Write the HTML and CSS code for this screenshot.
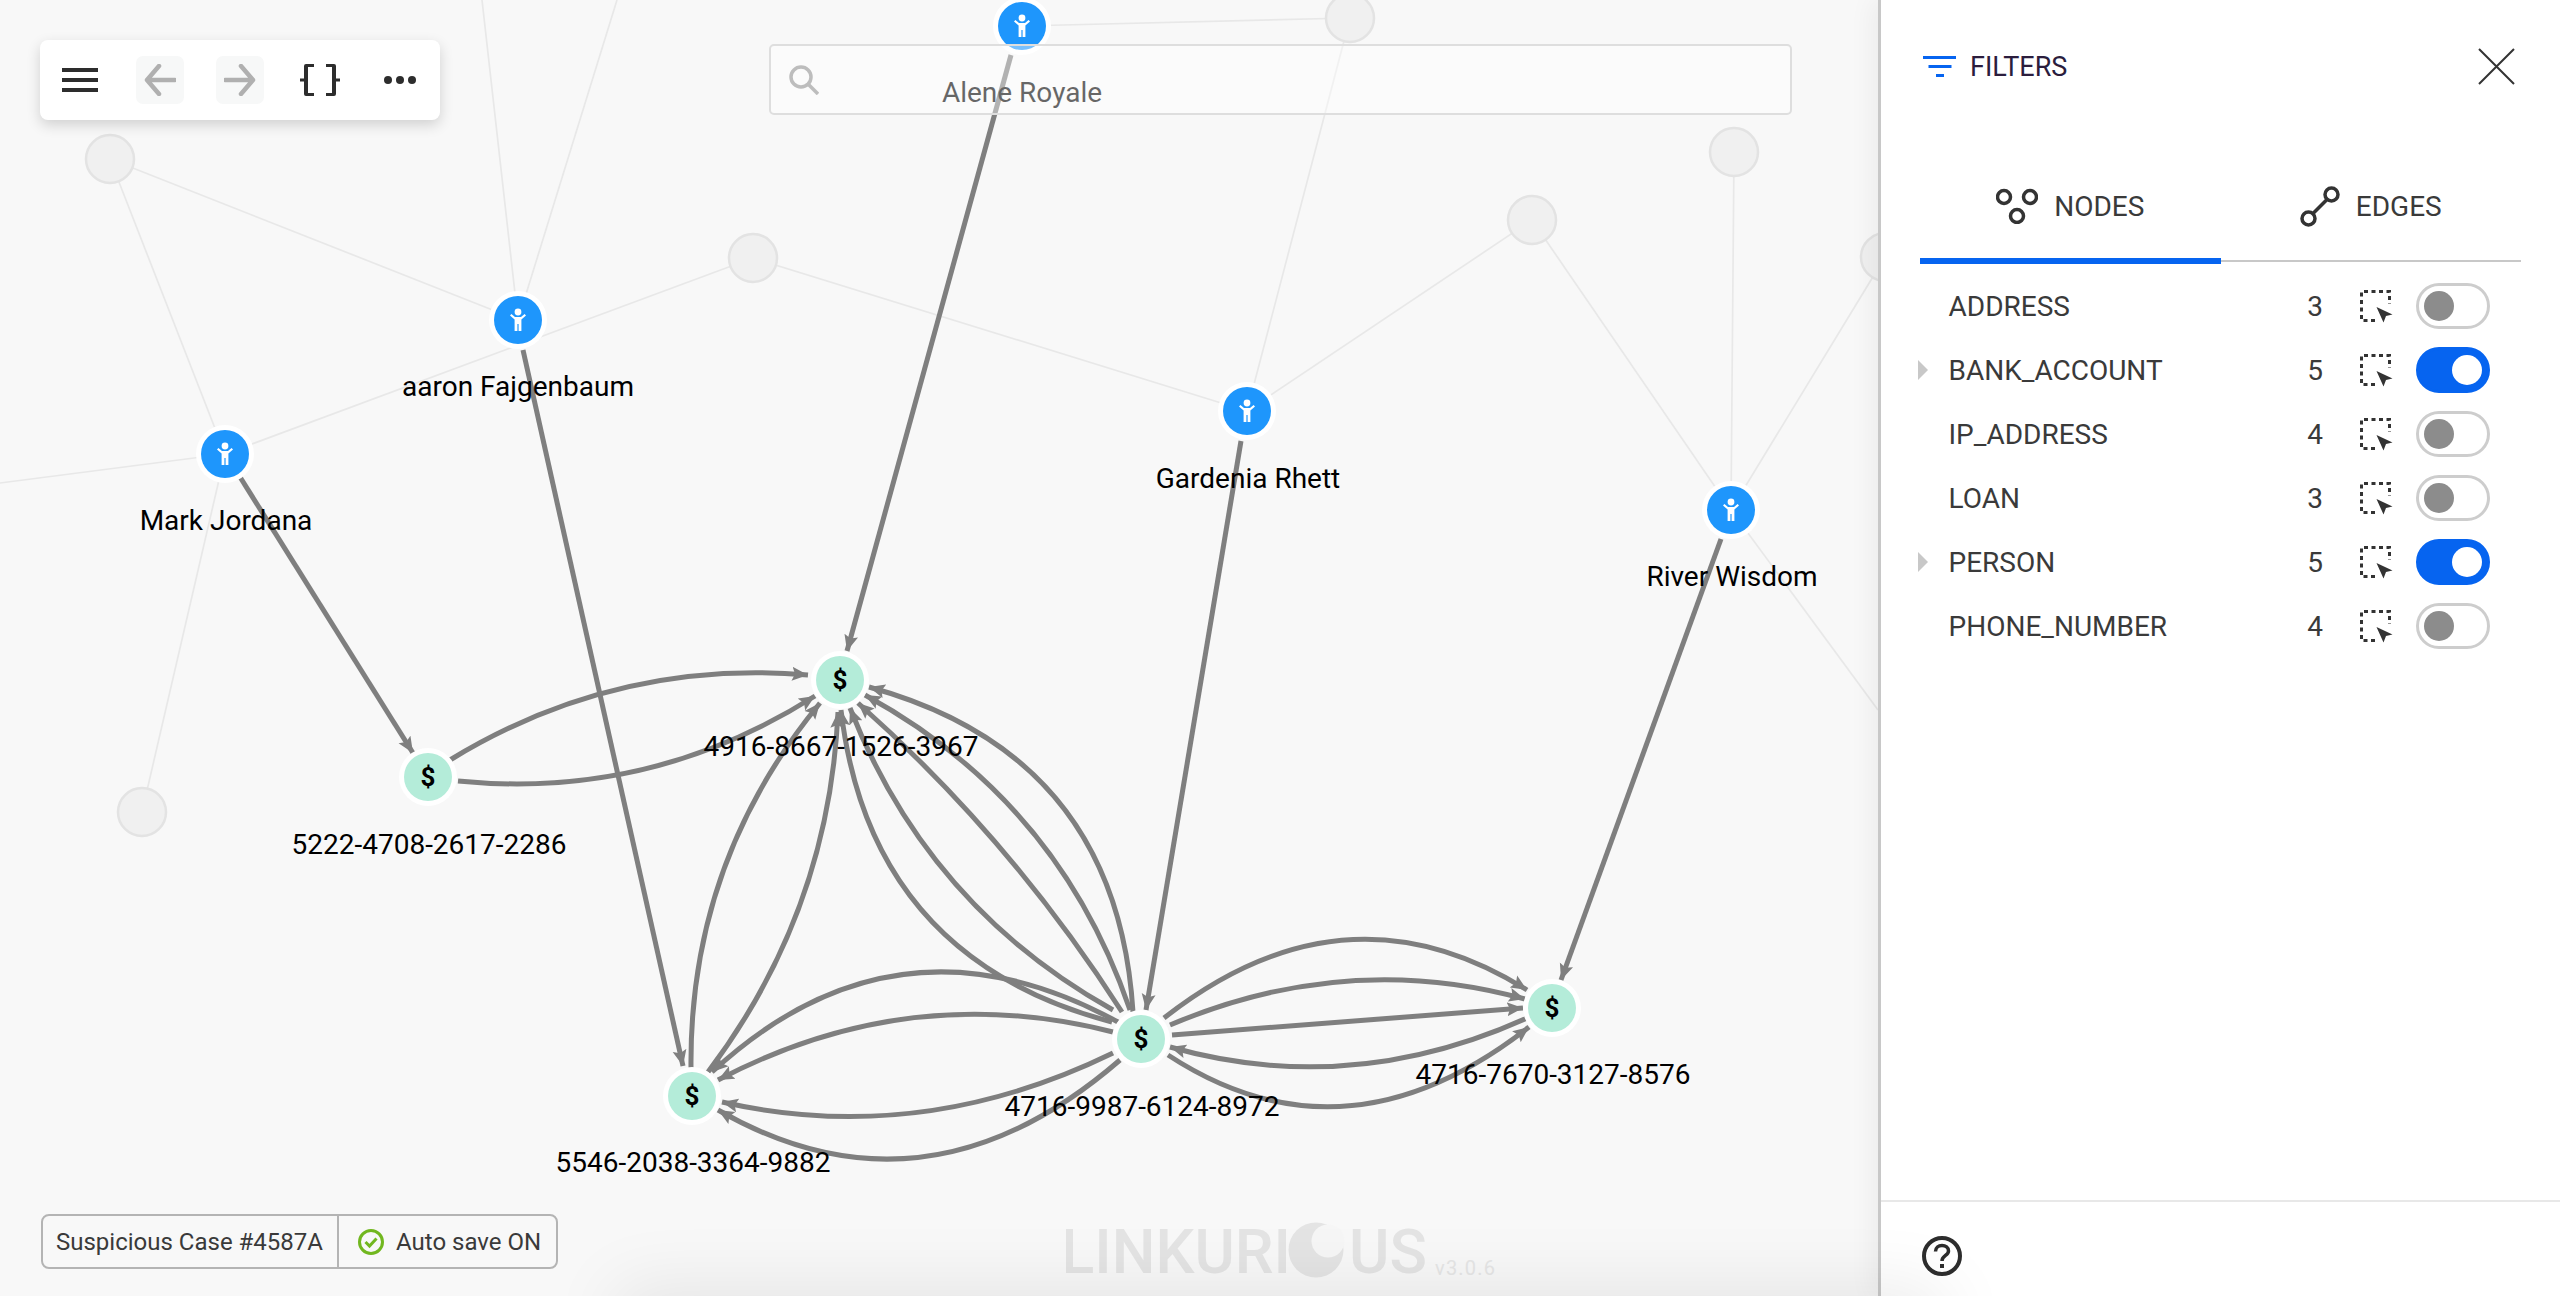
FILE: index.html
```html
<!DOCTYPE html>
<html lang="en">
<head>
<meta charset="utf-8">
<title>Linkurious - Filters</title>
<link rel="stylesheet" href="styles.css">
</head>
<body>
<svg class="defs" width="0" height="0" aria-hidden="true">
  <defs>
    <marker id="arrow" markerUnits="userSpaceOnUse" markerWidth="17" markerHeight="16" refX="16" refY="8" orient="auto">
      <path class="arrowhead" d="M0 1 L16 8 L0 15 L3 8 Z"/>
    </marker>
    <symbol id="person" viewBox="-12 -12 24 24">
      <circle cx="0" cy="-8" r="3.4"/>
      <path d="M-8-4.6-6.6-6-3-3H3L6.6-6 8-4.6 3.4-.4V11H.6V4H-.6V11H-3.4V-.4Z"/>
    </symbol>
    <symbol id="select" viewBox="0 0 33 33">
      <path class="sel-dash" d="M15 30.5H1.5V1.5H29.5V14"/>
      <path class="sel-cursor" d="M16.5 17 32.5 24.5 26 26 23.5 32.5Z"/>
    </symbol>
  </defs>
</svg>

<main class="canvas">
  <svg class="graph" width="1878" height="1296" viewBox="0 0 1878 1296">
    <g class="faint">
      <path d="M110 159 518 320"/><path d="M110 159 225 454"/><path d="M482 0 518 320"/><path d="M617 0 518 320"/>
      <path d="M225 454 753 258"/><path d="M753 258 1247 411"/><path d="M225 454 0 483"/><path d="M225 454 142 812"/>
      <path d="M1022 26 1350 18"/><path d="M1350 18 1247 411"/><path d="M1532 220 1247 411"/><path d="M1532 220 1731 510"/>
      <path d="M1734 152 1731 510"/><path d="M1885 257 1731 510"/><path d="M1731 510 1878 710"/>
    </g>
    <g class="ghost">
      <circle cx="110" cy="159" r="24"/><circle cx="753" cy="258" r="24"/><circle cx="142" cy="812" r="24"/>
      <circle cx="1350" cy="18" r="24"/><circle cx="1532" cy="220" r="24"/><circle cx="1734" cy="152" r="24"/><circle cx="1885" cy="257" r="24"/>
    </g>
    <g class="edge">
      <path d="M240 477 413 753"/>
      <path d="M523 350 683 1066"/>
      <path d="M1011 55 847 651"/>
      <path d="M1241 441 1146 1010"/>
      <path d="M1721 539 1561 980"/>
      <path d="M450 760Q615 659 808 675"/>
      <path d="M458 781Q651 800 815 696"/>
      <path d="M708 1072Q829 912 838 712"/>
      <path d="M691 1068Q689 862 820 703"/>
      <path d="M1133 1012Q1117 755 869 687"/>
      <path d="M1130 1010Q1059 801 865 695"/>
      <path d="M1122 1012Q1011 839 858 703"/>
      <path d="M1113 1010Q927 906 850 708"/>
      <path d="M1112 1022Q870 958 841 710"/>
      <path d="M1118 1022Q897 901 712 1072"/>
      <path d="M1113 1032Q908 980 718 1080"/>
      <path d="M1113 1053Q920 1147 722 1102"/>
      <path d="M1120 1060Q925 1229 718 1110"/>
      <path d="M1164 1018Q1345 876 1527 990"/>
      <path d="M1170 1025Q1347 950 1525 999"/>
      <path d="M1172 1035 1523 1008"/>
      <path d="M1527 1018Q1350 1098 1170 1047"/>
      <path d="M1168 1055Q1345 1171 1529 1027"/>
    </g>
    <g class="ring">
      <circle cx="1022" cy="26" r="29"/><circle cx="518" cy="320" r="29"/><circle cx="225" cy="454" r="29"/><circle cx="1247" cy="411" r="29"/><circle cx="1731" cy="510" r="29"/>
      <circle cx="428" cy="777" r="29"/><circle cx="840" cy="680" r="29"/><circle cx="692" cy="1096" r="29"/><circle cx="1141" cy="1039" r="29"/><circle cx="1552" cy="1008" r="29"/>
    </g>
    <g class="person-fill">
      <circle cx="1022" cy="26" r="24"/><circle cx="518" cy="320" r="24"/><circle cx="225" cy="454" r="24"/><circle cx="1247" cy="411" r="24"/><circle cx="1731" cy="510" r="24"/>
    </g>
    <g class="person-icon">
      <use href="#person" x="1010" y="14" width="24" height="24"/>
      <use href="#person" x="506" y="308" width="24" height="24"/>
      <use href="#person" x="213" y="442" width="24" height="24"/>
      <use href="#person" x="1235" y="399" width="24" height="24"/>
      <use href="#person" x="1719" y="498" width="24" height="24"/>
    </g>
    <g class="account-fill">
      <circle cx="428" cy="777" r="24"/><circle cx="840" cy="680" r="24"/><circle cx="692" cy="1096" r="24"/><circle cx="1141" cy="1039" r="24"/><circle cx="1552" cy="1008" r="24"/>
    </g>
    <g class="dollar">
      <text x="428" y="786">$</text><text x="840" y="689">$</text><text x="692" y="1105">$</text><text x="1141" y="1048">$</text><text x="1552" y="1017">$</text>
    </g>
    <g class="label">
      <text x="1022" y="102">Alene Royale</text>
      <text x="518" y="396">aaron Fajgenbaum</text>
      <text x="226" y="530">Mark Jordana</text>
      <text x="1248" y="488">Gardenia Rhett</text>
      <text x="1732" y="586">River Wisdom</text>
      <text x="429" y="854">5222-4708-2617-2286</text>
      <text x="841" y="756">4916-8667-1526-3967</text>
      <text x="693" y="1172">5546-2038-3364-9882</text>
      <text x="1142" y="1116">4716-9987-6124-8972</text>
      <text x="1553" y="1084">4716-7670-3127-8576</text>
    </g>
  </svg>

  <nav class="toolbar">
    <span class="tool">
      <svg width="36" height="24" viewBox="0 0 36 24"><path class="ico-fill" d="M0 0H36V4H0ZM0 10H36V14H0ZM0 20H36V24H0Z"/></svg>
    </span>
    <span class="tool"><span class="tool-off">
      <svg width="32" height="32" viewBox="0 0 32 32"><path class="ico-off" d="M31 16H3M15 2 3 16 15 30"/></svg>
    </span></span>
    <span class="tool"><span class="tool-off">
      <svg width="32" height="32" viewBox="0 0 32 32"><path class="ico-off" d="M1 16H29M17 2 29 16 17 30"/></svg>
    </span></span>
    <span class="tool">
      <svg width="40" height="32" viewBox="0 0 40 32"><path class="ico-fill" d="M4 2Q4 0 6 0H14V3H8V29H14V32H6Q4 32 4 30V17.500H0V14.500H4ZM36 2Q36 0 34 0H26V3H32V29H26V32H34Q36 32 36 30V17.500H40V14.500H36Z"/></svg>
    </span>
    <span class="tool">
      <svg width="32" height="8" viewBox="0 0 32 8"><circle class="ico-fill" cx="4" cy="4" r="4"/><circle class="ico-fill" cx="16" cy="4" r="4"/><circle class="ico-fill" cx="28" cy="4" r="4"/></svg>
    </span>
  </nav>

  <div class="search">
    <svg width="30" height="30" viewBox="0 0 30 30"><circle class="search-ico" cx="12" cy="12" r="10"/><path class="search-ico" d="M19 19 29 29"/></svg>
  </div>

  <div class="status">
    <span class="status-cell status-name">Suspicious Case #4587A</span>
    <span class="status-cell status-save">
      <svg width="26" height="26" viewBox="0 0 26 26"><circle class="check" cx="13" cy="13" r="11.500"/><path class="check" d="M7.500 13 11.500 17 18.500 9.500"/></svg>
      Auto save ON
    </span>
  </div>

  <div class="logo">
    <svg width="440" height="60" viewBox="0 0 440 60">
      <text class="logo-text" x="-5" y="51" textLength="230" lengthAdjust="spacingAndGlyphs">LINKURI</text>
      <circle class="logo-o" cx="250" cy="28" r="27.500"/>
      <circle class="logo-cut" cx="262" cy="19" r="16.500"/>
      <text class="logo-text" x="283" y="51" textLength="78" lengthAdjust="spacingAndGlyphs">US</text>
      <text class="logo-version" x="369" y="53">v3.0.6</text>
    </svg>
  </div>
</main>

<aside class="panel">
  <header class="panel-head">
    <svg class="filter-ico" width="33" height="21" viewBox="0 0 33 21"><path d="M0 0H33V3H0ZM5.500 9H28.500V12H5.500ZM13 18H21V21H13Z"/></svg>
    <span class="panel-title">FILTERS</span>
    <svg class="close-ico" width="37" height="37" viewBox="0 0 37 37"><path d="M1 1 36 36M36 1 1 36"/></svg>
  </header>

  <div class="tabs">
    <div class="tab tab-active">
      <svg width="42" height="36" viewBox="0 0 42 36"><g class="tab-ico"><circle cx="8" cy="9" r="6.500"/><circle cx="34" cy="9" r="6.500"/><circle cx="21" cy="28" r="6.500"/></g></svg>
      <span>NODES</span>
    </div>
    <div class="tab">
      <svg width="40" height="41" viewBox="0 0 40 41"><g class="tab-ico"><circle cx="8.500" cy="32.500" r="6.500"/><circle cx="31.500" cy="8.500" r="6.500"/><path d="M13 27.500 27 13.500"/></g></svg>
      <span>EDGES</span>
    </div>
  </div>

  <ul class="rows">
    <li class="row"><span class="caret caret-none"></span><span class="row-name">ADDRESS</span><span class="row-count">3</span><svg class="row-sel" width="33" height="33"><use href="#select"/></svg><span class="toggle"><span class="knob"></span></span></li>
    <li class="row"><span class="caret"></span><span class="row-name">BANK_ACCOUNT</span><span class="row-count">5</span><svg class="row-sel" width="33" height="33"><use href="#select"/></svg><span class="toggle toggle-on"><span class="knob"></span></span></li>
    <li class="row"><span class="caret caret-none"></span><span class="row-name">IP_ADDRESS</span><span class="row-count">4</span><svg class="row-sel" width="33" height="33"><use href="#select"/></svg><span class="toggle"><span class="knob"></span></span></li>
    <li class="row"><span class="caret caret-none"></span><span class="row-name">LOAN</span><span class="row-count">3</span><svg class="row-sel" width="33" height="33"><use href="#select"/></svg><span class="toggle"><span class="knob"></span></span></li>
    <li class="row"><span class="caret"></span><span class="row-name">PERSON</span><span class="row-count">5</span><svg class="row-sel" width="33" height="33"><use href="#select"/></svg><span class="toggle toggle-on"><span class="knob"></span></span></li>
    <li class="row"><span class="caret caret-none"></span><span class="row-name">PHONE_NUMBER</span><span class="row-count">4</span><svg class="row-sel" width="33" height="33"><use href="#select"/></svg><span class="toggle"><span class="knob"></span></span></li>
  </ul>

  <footer class="panel-foot">
    <svg width="40" height="40" viewBox="0 0 40 40"><circle class="help-ring" cx="20" cy="20" r="18"/><path class="help-mark" d="M13.500 15.500C13.500 11.500 16.500 9.500 20 9.500 23.500 9.500 26.500 11.500 26.500 15 26.500 19.500 20 19.500 20 25"/><path class="help-dot" d="M18 28H22V32H18Z"/></svg>
  </footer>
</aside>

<div class="bottom-fade"></div>
</body>
</html>
```

FILE: styles.css
```css
* { box-sizing: border-box; }

html, body { margin: 0; height: 100%; }

body {
  position: relative;
  display: flex;
  height: 1296px;
  overflow: hidden;
  font-family: Roboto, "Liberation Sans", sans-serif;
  background: #f8f8f8;
  color: #3a3a3a;
}

.defs { position: absolute; }

.canvas {
  position: relative;
  flex: 1;
  min-width: 0;
  background: #f8f8f8;
}

.graph { position: absolute; left: 0; top: 0; display: block; }

.arrowhead { fill: #7f7f7f; }

.faint path { fill: none; stroke: #e8e8e8; stroke-width: 1.7; }
.ghost circle { fill: #f0f0f0; stroke: #e3e3e3; stroke-width: 2.5; }

.edge path {
  fill: none;
  stroke: #7f7f7f;
  stroke-width: 5;
  marker-end: url(#arrow);
}

.ring circle { fill: #fff; }
.person-fill circle { fill: #1e96fc; }
.person-icon { fill: #fff; }
.account-fill circle { fill: #b4ecd9; }

.dollar text {
  font: 700 26px Roboto, sans-serif;
  text-anchor: middle;
  fill: #000;
}

.label text {
  font: 400 28px Roboto, sans-serif;
  text-anchor: middle;
  fill: #000;
}

.toolbar {
  position: absolute;
  left: 40px;
  top: 40px;
  display: flex;
  width: 400px;
  height: 80px;
  background: #fff;
  border-radius: 8px;
  box-shadow: 0 5px 14px rgba(0, 0, 0, .16);
}

.tool {
  flex: 0 0 80px;
  display: flex;
  align-items: center;
  justify-content: center;
}

.tool-off {
  display: flex;
  align-items: center;
  justify-content: center;
  width: 48px;
  height: 48px;
  border-radius: 7px;
  background: #f7f8f8;
}

.ico-fill { fill: #2d2d2d; }
.ico-off { fill: none; stroke: #b0b0b0; stroke-width: 4.5; stroke-linejoin: round; stroke-linecap: round; }

.search {
  position: absolute;
  left: 769px;
  top: 44px;
  display: flex;
  align-items: center;
  width: 1023px;
  height: 71px;
  padding-left: 18px;
  background: rgba(255, 255, 255, .4);
  border: 2px solid #dedede;
  border-radius: 5px;
}

.search-ico { fill: none; stroke: #bdbdbd; stroke-width: 3.5; }

.status {
  position: absolute;
  left: 41px;
  top: 1214px;
  display: flex;
  height: 55px;
  width: 517px;
  padding-top: 1px;
  border: 2px solid #b4b4b4;
  border-radius: 8px;
  font-size: 24px;
  color: #3a3a3a;
}

.status-cell { display: flex; align-items: center; }
.status-name { width: 296px; margin-top: -1px; padding: 1px 0 0 13px; border-right: 2px solid #b4b4b4; }
.status-save { gap: 12px; padding-left: 19px; }

.check { fill: none; stroke: #71b71f; stroke-width: 3; }

.logo {
  position: absolute;
  left: 1066px;
  top: 1222px;
}

.logo svg { display: block; }
.logo-text { font: 500 62px Roboto, sans-serif; fill: #e4e4e4; }
.logo-o { fill: #e4e4e4; }
.logo-cut { fill: #f6f6f6; }
.logo-version { font: 400 20px Roboto, sans-serif; letter-spacing: 1.2px; fill: #e6e6e6; }

.panel {
  flex: 0 0 682px;
  display: flex;
  flex-direction: column;
  background: #fff;
  border-left: 3px solid #c8c8c8;
  box-shadow: -6px 0 24px rgba(0, 0, 0, .05);
  z-index: 1;
}

.panel-head {
  display: flex;
  align-items: center;
  height: 132px;
  padding: 0 45px 0 42px;
}

.filter-ico { fill: #0664f0; margin-right: 14px; }
.panel-title { flex: 1; padding-top: 2px; font-size: 27px; color: #2b1d3d; }
.close-ico { fill: none; stroke: #333; stroke-width: 2; }

.tabs {
  display: flex;
  height: 130px;
  margin: 0 39px;
  border-bottom: 2px solid #c8c8c8;
}

.tab {
  flex: 1;
  display: flex;
  align-items: center;
  justify-content: center;
  gap: 16px;
  height: 132px;
  padding-top: 22px;
  border-bottom: 6px solid transparent;
  font-size: 28px;
  color: #3a3a3a;
}

.tab-active { border-bottom-color: #0664f0; }
.tab-ico { fill: none; stroke: #333; stroke-width: 3.5; }

.rows {
  list-style: none;
  margin: 12px 0 0;
  padding: 0 70px 0 37px;
}

.row {
  display: flex;
  align-items: center;
  height: 64px;
  font-size: 28px;
  color: #3a3a3a;
}

.caret {
  width: 0;
  height: 0;
  margin-right: 20.5px;
  border-left: 10px solid #c8c8c8;
  border-top: 10px solid transparent;
  border-bottom: 10px solid transparent;
}

.caret-none { border-left-color: transparent; }

.row-name { flex: 1; }
.row-count { width: 30px; text-align: right; }
.row-sel { margin-left: 37px; flex: none; }
.sel-dash { fill: none; stroke: #333; stroke-width: 3; stroke-dasharray: 4 3.500; }
.sel-cursor { fill: #333; }

.toggle {
  display: flex;
  align-items: center;
  width: 74px;
  height: 46px;
  margin-left: 23px;
  padding: 0 5px;
  border: 3px solid #cdcdcd;
  border-radius: 23px;
  background: #fff;
}

.knob {
  width: 30px;
  height: 30px;
  border-radius: 50%;
  background: #8c8c8c;
}

.toggle-on {
  justify-content: flex-end;
  background: #0664f0;
  border-color: #0664f0;
}

.toggle-on .knob { background: #fff; }

.panel-foot {
  margin-top: auto;
  height: 96px;
  padding: 34px 0 0 41px;
  border-top: 2px solid #e8e8e8;
}

.panel-foot svg { display: block; }
.help-ring { fill: none; stroke: #2d2d2d; stroke-width: 4; }
.help-mark { fill: none; stroke: #2d2d2d; stroke-width: 3.5; }
.help-dot { fill: #2d2d2d; }

.bottom-fade {
  position: absolute;
  left: 640px;
  top: 1310px;
  width: 1280px;
  height: 40px;
  z-index: 2;
  box-shadow: 0 0 70px 24px rgba(0, 0, 0, .08);
}
```
